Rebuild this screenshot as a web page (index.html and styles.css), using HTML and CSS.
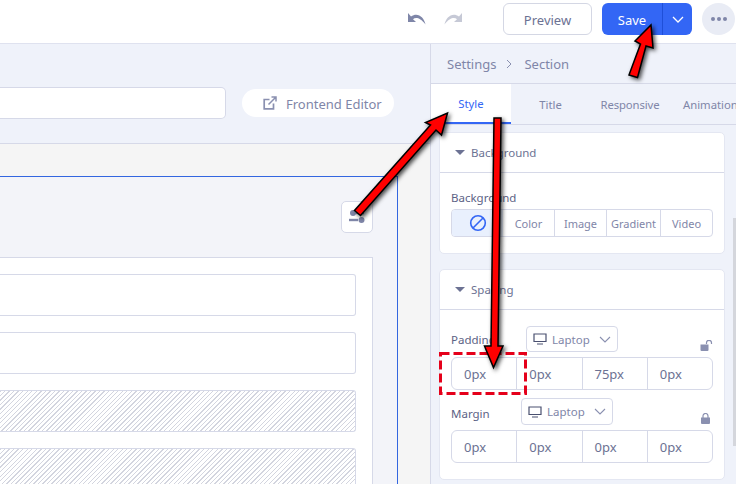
FILE: index.html
```html
<!DOCTYPE html>
<html lang="en">
<head>
<meta charset="utf-8">
<title>Section settings</title>
<link rel="stylesheet" href="styles.css">
</head>
<body>
<div class="page">
  <header class="topbar">
    <div class="history">
      <svg class="hist-icon" viewBox="0 0 20 12"><path d="M1 0v9h8L6 6.2C8.5 4 13 4.300 18.500 11.500 C17 4.500 11 -1 4 3.500L1 0z" fill="#7f86a8"/></svg>
      <svg class="hist-icon hist-off" viewBox="0 0 20 12"><path d="M19 0v9h-8L14 6.200C11.500 4 7 4.300 1.500 11.500 C3 4.500 9 -1 16 3.500L19 0z" fill="#c6c9d6"/></svg>
    </div>
    <button class="preview">Preview</button>
    <div class="save">
      <span class="save-label">Save</span>
      <span class="save-caret"><svg viewBox="0 0 12 7" class="caret-white"><path d="M1 1l5 5 5-5" fill="none" stroke="#fff" stroke-width="1.300"/></svg></span>
    </div>
    <div class="more"><i></i><i></i><i></i></div>
  </header>
  <main class="main">
    <section class="left">
      <div class="toolbar">
        <div class="urlbar"></div>
        <div class="frontend">
          <svg class="ext" viewBox="0 0 14 14"><path d="M10.500 7.500V12.800H1.200V3.500H6.500" fill="none" stroke="#8a90b0" stroke-width="1.700"/><path d="M5.500 8.500L12.500 1.500M8.500 1H13V5.500" fill="none" stroke="#8a90b0" stroke-width="1.500"/></svg>
          <span>Frontend Editor</span>
        </div>
      </div>
      <div class="canvas">
        <div class="frame">
          <div class="frame-tools">
            <div class="tool-btn">
              <svg viewBox="0 0 16 14" class="tool-icon"><circle cx="4" cy="3" r="3" fill="#7f86a8"/><rect x="7" y="1.800" width="8" height="2.400" fill="#7f86a8"/><rect x="0" y="8.800" width="9" height="2.400" fill="#7f86a8"/><circle cx="12.500" cy="10" r="3" fill="#7f86a8"/></svg>
            </div>
          </div>
          <div class="sheet">
            <div class="row"></div>
            <div class="row"></div>
            <div class="row hatch"></div>
            <div class="row hatch"></div>
          </div>
        </div>
      </div>
    </section>
    <aside class="panel">
      <div class="crumbs"><span>Settings</span><svg viewBox="0 0 6 10" class="crumb-sep"><path d="M1 1l4 4-4 4" fill="none" stroke="#8a90b0"/></svg><span>Section</span></div>
      <nav class="tabs">
        <span class="tab active">Style</span>
        <span class="tab t-title">Title</span>
        <span class="tab t-resp">Responsive</span>
        <span class="tab t-anim">Animation</span>
      </nav>
      <div class="body">
        <section class="card card-bg">
          <h3 class="card-head"><i class="tri"></i>Background</h3>
          <div class="card-body">
            <div class="field-label">Background</div>
            <div class="seg">
              <span class="seg-item seg-none"><svg viewBox="0 0 18 18" class="none-icon"><circle cx="9" cy="9" r="7.300" fill="none" stroke="#3366f5" stroke-width="1.600"/><path d="M4 14L14 4" stroke="#3366f5" stroke-width="1.600"/></svg></span>
              <span class="seg-item seg-color">Color</span>
              <span class="seg-item seg-image">Image</span>
              <span class="seg-item seg-grad">Gradient</span>
              <span class="seg-item seg-video">Video</span>
            </div>
          </div>
        </section>
        <section class="card card-sp">
          <h3 class="card-head"><i class="tri"></i>Spacing</h3>
          <div class="card-body spacing">
            <div class="sp-head sp-pad">
              <span class="sp-label">Padding</span>
              <span class="device dev-pad">
                <svg viewBox="0 0 14 12" class="monitor"><path d="M1 1h12v7.500H1zM4 11h6" fill="none" stroke="#4a5070" stroke-width="1.200"/></svg>
                Laptop
                <svg viewBox="0 0 12 7" class="caret"><path d="M1 1l5 5 5-5" fill="none" stroke="#8a90b0" stroke-width="1.100"/></svg>
              </span>
              <svg viewBox="0 0 13 11" class="lock"><path d="M0.500 4.500h8v5.500a1 1 0 0 1-1 1h-6a1 1 0 0 1-1-1z" fill="#8a90b0"/><path d="M6.500 4V2.800a2.500 2.500 0 0 1 5 0V4" fill="none" stroke="#8a90b0" stroke-width="1.200"/></svg>
            </div>
            <div class="inputs">
              <span>0px</span><span>0px</span><span>75px</span><span>0px</span>
            </div>
            <div class="sp-head sp-mar">
              <span class="sp-label">Margin</span>
              <span class="device dev-mar">
                <svg viewBox="0 0 14 12" class="monitor"><path d="M1 1h12v7.500H1zM4 11h6" fill="none" stroke="#4a5070" stroke-width="1.200"/></svg>
                Laptop
                <svg viewBox="0 0 12 7" class="caret"><path d="M1 1l5 5 5-5" fill="none" stroke="#8a90b0" stroke-width="1.100"/></svg>
              </span>
              <svg viewBox="0 0 9 11" class="lock lock-closed"><path d="M0 4.500h9v5.500a1 1 0 0 1-1 1h-7a1 1 0 0 1-1-1z" fill="#8a90b0"/><path d="M2 5V3a2.500 2.500 0 0 1 5 0V5" fill="none" stroke="#8a90b0" stroke-width="1.200"/></svg>
            </div>
            <div class="inputs">
              <span>0px</span><span>0px</span><span>0px</span><span>0px</span>
            </div>
          </div>
        </section>
        <div class="scrollbar"></div>
      </div>
    </aside>
  </main>
  <svg class="arrows" viewBox="0 0 736 484">
    <defs>
      <filter id="sh" x="-30%" y="-30%" width="160%" height="160%"><feDropShadow dx="2" dy="2" stdDeviation="2" flood-color="#000" flood-opacity=".7"/></filter>
    </defs>
    <rect x="440.500" y="353.500" width="85" height="40" fill="none" stroke="#e5001a" stroke-width="3" stroke-dasharray="9 4"/>
    <g filter="url(#sh)" fill="#ff0000" stroke="#000" stroke-width="1.500" stroke-linejoin="miter">
      <polygon points="651,25 653,48 646,46 637.500,77.500 629,75 640.500,44 635,41"/>
      <polygon points="447.500,113 441.500,135 436,130 360.500,215.500 354.500,210.500 430.500,125 425.500,122.500"/>
      <polygon points="494,118 501,118 498,346 503,346 493.500,367.500 484.500,346 491,346"/>
    </g>
  </svg>
</div>
</body>
</html>
```
FILE: styles.css
```css
* { box-sizing: border-box; }
html, body { margin: 0; padding: 0; }
body { font-family: "Noto Sans", sans-serif; color: #6c7293; font-size: 12px; overflow: hidden; }
.page { position: relative; width: 736px; height: 484px; overflow: hidden; background: #eff2fa; }

.topbar { height: 44px; background: #fff; border-bottom: 1px solid #dfe2ef; display: flex; align-items: flex-start; padding: 3px 1px 0 0; }
.history { display: flex; gap: 16px; margin: 10px 40px 0 auto; }
.hist-icon { width: 20px; height: 12px; display: block; }
.preview { width: 89px; height: 32px; border: 1px solid #d4d7e4; border-radius: 6px; background: #fff; font: 13px "Noto Sans", sans-serif; color: #6c7293; padding: 1px 0 0; margin-right: 10px; }
.save { width: 90px; height: 32px; display: flex; background: #3366f5; border-radius: 6px; color: #fff; font-size: 13px; margin-right: 10px; }
.save-label { width: 61px; display: flex; align-items: center; justify-content: center; border-right: 1px solid #1f4fd8; padding-top: 1px; }
.save-caret { flex: 1; display: flex; align-items: center; justify-content: center; }
.caret-white { width: 12px; height: 7px; }
.more { width: 33px; height: 32px; border-radius: 50%; background: #e9ecf5; display: flex; align-items: center; justify-content: center; gap: 2px; }
.more i { width: 4px; height: 4px; border-radius: 50%; background: #7f86a8; }

.main { display: flex; height: 440px; }
.left { width: 430px; flex: none; display: flex; flex-direction: column; }
.toolbar { height: 100px; flex: none; display: flex; align-items: center; gap: 16px; border-bottom: 1px solid #d6d9e8; padding-top: 19px; }
.urlbar { width: 226px; height: 32px; background: #fff; border: 1px solid #d6d9e8; border-left: 0; border-radius: 0 5px 5px 0; }
.frontend { width: 152px; height: 28px; background: #fff; border-radius: 14px; display: flex; align-items: center; padding: 1px 0 0 21px; gap: 9px; font-size: 13px; color: #7f86a8; }
.ext { width: 14px; height: 14px; flex: none; margin-top: -1px; }
.canvas { flex: 1; min-height: 0; background: #f5f5f5; padding: 32px 32px 0 0; }
.frame { height: 100%; background: #f3f4f9; border-top: 1px solid #3366e0; border-right: 1px solid #3366e0; padding: 24px 24px 0 0; }
.frame-tools { display: flex; justify-content: flex-end; }
.tool-btn { width: 32px; height: 32px; background: #fff; border: 1px solid #d6d9e8; border-radius: 5px; display: flex; align-items: center; justify-content: center; }
.tool-icon { width: 16px; height: 14px; }
.sheet { background: #fff; border-right: 1px solid #d6d9e8; border-top: 1px solid #d6d9e8; margin-top: 24px; height: 300px; padding: 16px 16px 0 0; display: flex; flex-direction: column; gap: 16px; }
.row { height: 42px; flex: none; border: 1px solid #d6d9e8; border-left: 0; border-radius: 0 3px 3px 0; background: #fff; }
.hatch { background: repeating-linear-gradient(-45deg, #d3d5df 0, #d3d5df 1px, #fff 1px, #fff 3.200px); }

.panel { flex: 1; border-left: 1px solid #d6d9e8; display: flex; flex-direction: column; min-width: 0; }
.crumbs { height: 40px; flex: none; display: flex; align-items: center; padding-left: 16px; border-bottom: 1px solid #d6d9e8; font-size: 13px; color: #7f86a8; }
.crumb-sep { width: 6px; height: 10px; margin: 0 12px 0 10px; }
.tabs { height: 41px; flex: none; display: flex; border-bottom: 1px solid #d6d9e8; font-size: 11.300px; color: #7f86a8; overflow: hidden; }
.tab { display: flex; align-items: center; justify-content: center; flex: none; height: 40px; }
.tab.active { width: 80px; background: #fff; color: #3366f5; border-bottom: 2px solid #3366f5; height: 40px; }
.t-title { width: 79px; }
.t-resp { width: 80px; letter-spacing: -.1px; }
.t-anim { padding-left: 13px; }
.body { position: relative; flex: 1; min-height: 0; padding: 7px 11px 0 8px; display: flex; flex-direction: column; gap: 15px; }
.card { background: #fff; border: 1px solid #e4e7f2; border-radius: 5px; flex: none; }
.card-head { height: 40px; margin: 0; border-bottom: 1px solid #d6d9e8; display: flex; align-items: center; padding-left: 15px; font-weight: 400; font-size: 11.500px; color: #6c7293; }
.tri { width: 0; height: 0; border: 5px solid transparent; border-top: 5px solid #6c7293; border-bottom: 0; margin-right: 6px; }
.card-bg { height: 122px; }
.card-sp { height: 211px; }
.card-body { padding: 16px 11px 0; }
.field-label { font-size: 11.500px; line-height: 17px; color: #5c6285; margin-bottom: 3px; }
.seg { display: flex; height: 28px; border: 1px solid #d6d9e8; border-radius: 4px; font-size: 11px; color: #7f86a8; }
.seg-item { display: flex; align-items: center; justify-content: center; border-left: 1px solid #d6d9e8; flex: none; }
.seg-none { width: 51px; background: #e9f0fd; border-left: 0; border-radius: 3px 0 0 3px; }
.seg-color { width: 51px; border-left: 0; }
.seg-image { width: 52px; }
.seg-grad { width: 54px; }
.seg-video { flex: 1; }
.none-icon { width: 18px; height: 18px; }
.spacing { padding-top: 16px; }
.sp-head { display: flex; align-items: flex-start; position: relative; }
.sp-pad { height: 31px; }
.sp-mar { height: 32px; margin-top: 8px; }
.sp-label { font-size: 11.500px; line-height: 17px; color: #5c6285; width: 46px; flex: none; }
.sp-pad .sp-label { margin-top: 5px; }
.sp-mar .sp-label { margin-top: 7px; }
.device { display: flex; align-items: center; height: 26px; width: 92px; border: 1px solid #d6d9e8; border-radius: 4px; padding: 0 6px; font-size: 11.500px; color: #7f86a8; background: #fff; gap: 5px; }
.dev-pad { margin-left: 29px; }
.dev-mar { margin-left: 24px; height: 27px; }
.monitor { width: 14px; height: 12px; flex: none; }
.caret { width: 12px; height: 7px; margin-left: auto; }
.lock { width: 13px; height: 11px; margin-left: auto; margin-top: 14px; }
.lock-closed { width: 9px; height: 11px; margin-top: 15px; margin-right: 3px; }
.inputs { display: flex; height: 33px; border: 1px solid #d6d9e8; border-radius: 6px; font-size: 13px; color: #6c7293; }
.inputs span { flex: 1; display: flex; align-items: center; padding-left: 12px; border-left: 1px solid #d6d9e8; }
.inputs span:first-child { border-left: 0; }
.scrollbar { position: absolute; right: 0; top: 93px; width: 3px; height: 228px; background: #d4d6dc; }

.arrows { position: absolute; inset: 0; width: 736px; height: 484px; pointer-events: none; }
```
